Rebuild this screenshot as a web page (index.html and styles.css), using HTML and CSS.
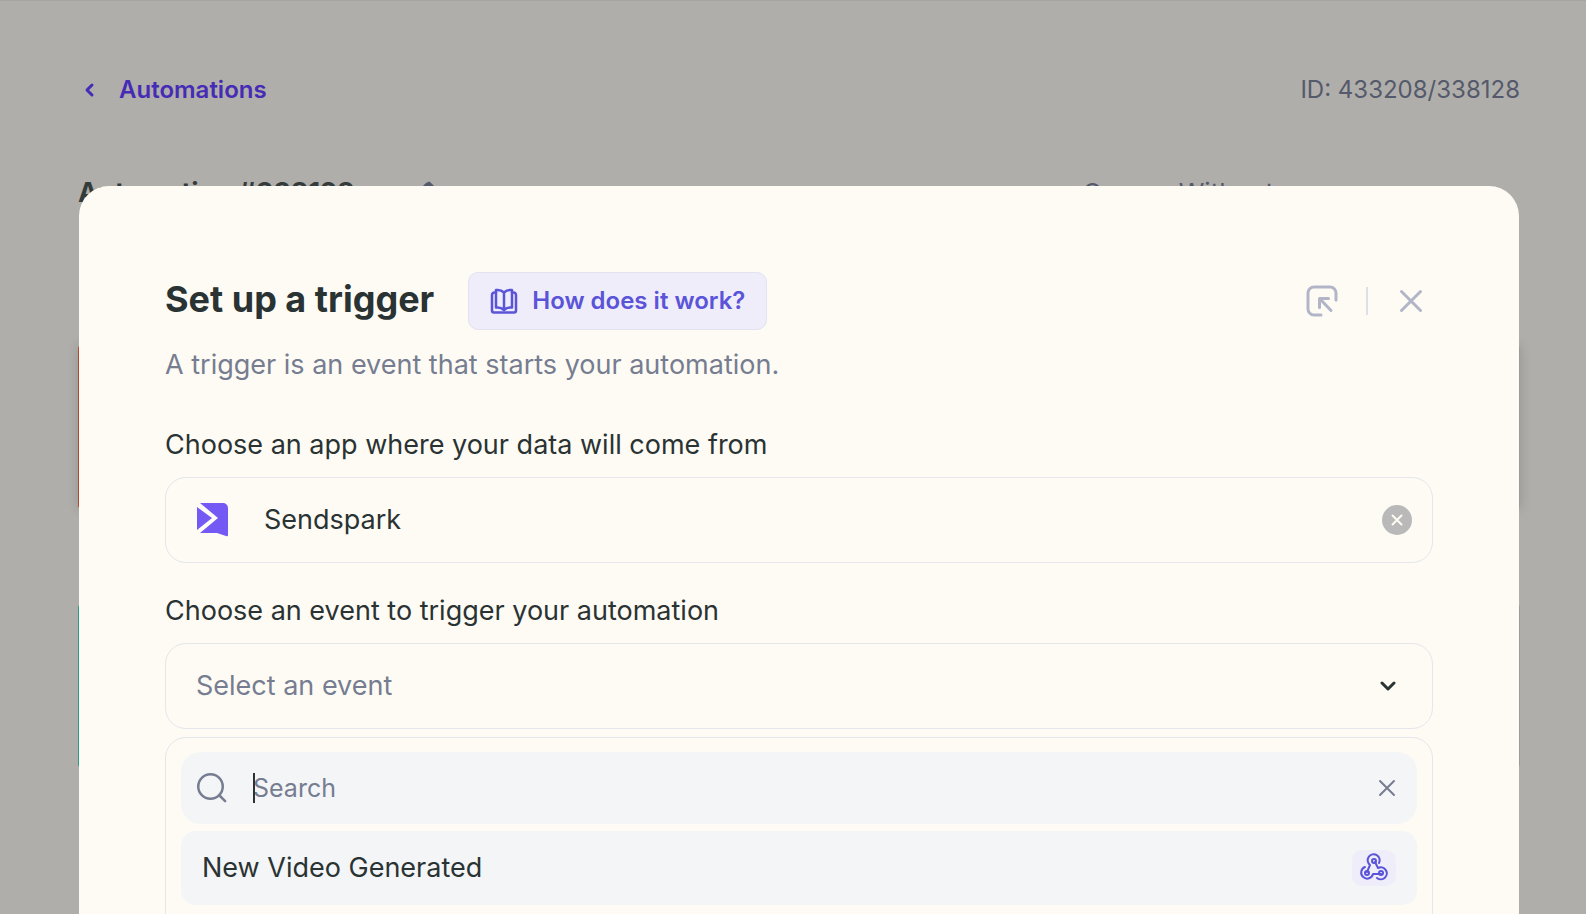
FILE: index.html
```html
<!DOCTYPE html>
<html lang="en">
<head>
    <meta charset="UTF-8">
    <meta name="viewport" content="width=device-width, initial-scale=1.0">
    <title>Set up a trigger</title>
    <link rel="stylesheet" href="styles.css">
</head>
<body>

    <!-- Automation page -->
    <div class="page">
        <div class="page-top">
            <a class="back-link" href="#">
                <svg width="24" height="24" viewBox="0 0 24 24"><path d="M14 7l-5 5 5 5"/></svg>
                Automations
            </a>
            <span class="page-id">ID: 433208/338128</span>
        </div>

        <div class="page-title">
            <strong>Automation #338128</strong>
            <svg class="edit-icon" width="28" height="28" viewBox="0 0 28 28"><path d="M4 17V22h5L21 10l-5-5zM12 10l6-6 6 6"/></svg>
            <span class="owner">Owner: Without</span>
        </div>

        <div class="step step-trigger"></div>
        <div class="step step-action"></div>
    </div>

    <!-- Trigger modal -->
    <div class="modal" role="dialog" aria-labelledby="modalTitle">
        <div class="modal-header">
            <h1 id="modalTitle">Set up a trigger</h1>
            <button class="help-button" type="button">
                <svg width="28" height="28" viewBox="0 0 28 28">
                    <path d="M14 5.500c-2-2-4.500-3-8-2.500v17.500c3.500-.5 6 .5 8 2.500 2-2 4.500-3 8-2.500V3C18.500 2.500 16 3.500 14 5.500zM14 5.500V23"/>
                    <path d="M6 5.500H4.500A2.500 2.500 0 0 0 2 8v15.500A2 2 0 0 0 4 25.500h20a2 2 0 0 0 2-2V8a2.500 2.500 0 0 0-2.500-2.500H22"/>
                </svg>
                How does it work?
            </button>
            <div class="modal-actions">
                <button class="icon-button" type="button" aria-label="Collapse">
                    <svg width="32" height="32" viewBox="0 0 32 32"><path d="M15 30H8a6 6 0 0 1-6-6V8A6 6 0 0 1 8 2h16A6 6 0 0 1 30 8v7"/><path d="M13.500 22.500v-9h9M14 14l11 11.500"/></svg>
                </button>
                <span class="divider"></span>
                <button class="icon-button" type="button" aria-label="Close">
                    <svg width="24" height="24" viewBox="0 0 24 24"><path d="M2.500 2.500l19 19M21.500 2.500l-19 19"/></svg>
                </button>
            </div>
        </div>
        <p class="subtitle">A trigger is an event that starts your automation.</p>

        <label class="field-label" for="app">Choose an app where your data will come from</label>
        <div class="field">
            <svg class="app-logo" width="32" height="34" viewBox="0 0 32 34">
                <path d="M4 0h23a5 5 0 0 1 5 5v27q0 2-2 1l-9-3H4l18-15z"/>
                <path d="M1 4l15 11L1 27z"/>
            </svg>
            <input class="app-input" type="text" id="app" value="Sendspark" readonly>
            <button class="clear-button" type="button" aria-label="Clear app">
                <svg width="12" height="12" viewBox="0 0 12 12"><path d="M1.500 1.500l9 9M10.500 1.500l-9 9"/></svg>
            </button>
        </div>

        <label class="field-label" for="event">Choose an event to trigger your automation</label>
        <div class="field">
            <select class="event-select" id="event">
                <option>Select an event</option>
            </select>
            <svg class="chevron" width="16" height="10" viewBox="0 0 16 10"><path d="M2 2l6 6 6-6"/></svg>
        </div>

        <!-- Event list -->
        <div class="dropdown">
            <div class="search">
                <svg class="search-icon" width="30" height="30" viewBox="0 0 24 24"><circle cx="10.800" cy="10.800" r="9.800"/><path d="M18 18l4.500 4.500"/></svg>
                <div class="search-text">
                    <input class="search-input" type="text" placeholder="Search" aria-label="Search">
                    <span class="caret"></span>
                </div>
                <button class="icon-button reset-button" type="button" aria-label="Reset search">
                    <svg width="18" height="18" viewBox="0 0 18 18"><path d="M2 2l14 14M16 2L2 16"/></svg>
                </button>
            </div>
            <button class="option" type="button">
                New Video Generated
                <span class="badge">
                    <svg width="34" height="34" viewBox="0 0 34 34">
                        <path d="M22 12a6 6 0 1 0-9 2l-3 7"/>
                        <path d="M8 16a6 6 0 1 0 8 7h8"/>
                        <path d="M18 11l3 6a6 6 0 1 1-1 10"/>
                        <circle cx="17" cy="10" r="2"/>
                        <circle cx="10" cy="22" r="2"/>
                        <circle cx="24" cy="22" r="2"/>
                    </svg>
                </span>
            </button>
        </div>
    </div>

</body>
</html>
```
FILE: styles.css
```css
* {
    box-sizing: border-box;
}
body {
    margin: 0;
    min-height: 100vh;
    overflow: hidden;
    font-family: Inter, Arial, sans-serif;
    font-size: 27px;
    line-height: 34px;
    color: #2a3333;
    background-color: #b0aeaa;
}
button, input, select {
    font: inherit;
    color: inherit;
    border: none;
    background: none;
    padding: 0;
    outline: none;
}
button {
    cursor: pointer;
}
svg {
    flex: none;
    fill: none;
    stroke: currentColor;
    stroke-width: 2;
    stroke-linecap: round;
    stroke-linejoin: round;
}

/* page behind the modal */
.page {
    padding: 72px 66px 0 78px;
    border-top: 1px solid #a6a5a2;
    font-size: 24px;
    color: #545a6b;
}
.page-top {
    display: flex;
    justify-content: space-between;
    align-items: center;
}
.back-link {
    display: flex;
    align-items: center;
    gap: 17px;
    color: #452bb5;
    font-weight: 600;
    text-decoration: none;
}
.back-link svg {
    stroke-width: 3;
}
.page-title {
    display: flex;
    align-items: center;
    margin-top: 69px;
    font-size: 26px;
}
.page-title strong {
    color: #343c3b;
    font-size: 27px;
}
.edit-icon {
    margin-left: 56px;
    stroke-width: 3;
}
.owner {
    margin-left: auto;
    padding-right: 246px;
}
.step {
    height: 164px;
    border-radius: 4px;
    border: 2px solid #9c9b99;
    box-shadow: 0 0 12px rgba(0, 0, 0, 0.15);
}
.step-trigger {
    margin-top: 135px;
    border-left-color: #b5482c;
}
.step-action {
    margin-top: 95px;
    border-left-color: #2a9b85;
    box-shadow: none;
}

/* modal */
.modal {
    position: absolute;
    top: 186px;
    left: 79px;
    right: 67px;
    bottom: 0;
    overflow: hidden;
    padding: 86px 86px 0;
    border-radius: 30px 30px 0 0;
    background-color: #fefbf4;
}
.modal-header {
    display: flex;
    align-items: center;
}
h1 {
    margin: 0;
    padding-bottom: 4px;
    font-size: 36px;
    line-height: 50px;
    font-weight: 700;
}
.help-button {
    display: flex;
    align-items: center;
    gap: 14px;
    height: 58px;
    margin-left: 34px;
    padding: 0 21px;
    border: 1px solid #e3e3f0;
    border-radius: 10px;
    background-color: #eeedf9;
    color: #5b54d9;
    font-size: 24px;
    font-weight: 600;
}
.help-button svg {
    stroke-width: 2.5;
}
.modal-actions {
    display: flex;
    align-items: center;
    gap: 28px;
    margin-left: auto;
    padding-right: 10px;
}
.icon-button {
    display: flex;
    color: #b1b5c7;
}
.modal-actions svg {
    stroke-width: 3;
}
.divider {
    width: 2px;
    height: 28px;
    margin-right: 3px;
    background-color: #dfe0e7;
}
.subtitle {
    margin: 18px 0 46px;
    color: #767d91;
}
.field-label {
    display: block;
    margin-bottom: 15px;
}
.field {
    display: flex;
    align-items: center;
    height: 86px;
    margin-bottom: 31px;
    padding: 0 20px 0 30px;
    border: 1px solid #e5e6ec;
    border-radius: 21px;
}
.app-logo {
    fill: #7559f5;
    stroke: none;
}
.app-input {
    flex: 1;
    min-width: 0;
    margin-left: 36px;
}
.clear-button {
    display: flex;
    align-items: center;
    justify-content: center;
    width: 30px;
    height: 30px;
    border-radius: 50%;
    background-color: #b9b9b9;
    color: #fefbf4;
}
.event-select {
    flex: 1;
    appearance: none;
    color: #767d91;
}
.chevron {
    margin-right: 16px;
    stroke-width: 3;
}

/* dropdown */
.dropdown {
    display: flex;
    flex-direction: column;
    gap: 7px;
    height: 400px;
    margin-top: -23px;
    padding: 14px 15px;
    border: 1px solid #e5e6ec;
    border-radius: 21px;
}
.search {
    display: flex;
    align-items: center;
    height: 72px;
    padding: 0 21px 0 16px;
    border-radius: 20px;
    background-color: #f4f5f7;
    font-size: 25px;
}
.search-icon {
    color: #767d91;
}
.search-text {
    position: relative;
    flex: 1;
    margin-left: 26px;
}
.search-input {
    width: 100%;
}
.search-input::placeholder {
    color: #767d91;
    opacity: 1;
}
.caret {
    position: absolute;
    top: 2px;
    left: 0;
    width: 2px;
    height: 30px;
    background-color: #2a3333;
}
.reset-button {
    color: #767d91;
}
.option {
    display: flex;
    align-items: center;
    justify-content: space-between;
    height: 74px;
    padding: 0 21px;
    border-radius: 15px;
    background-color: #f4f5f7;
    text-align: left;
}
.badge {
    display: flex;
    align-items: center;
    justify-content: center;
    width: 44px;
    height: 36px;
    border-radius: 10px;
    background-color: #eeedf9;
    color: #5b54d9;
}
```
